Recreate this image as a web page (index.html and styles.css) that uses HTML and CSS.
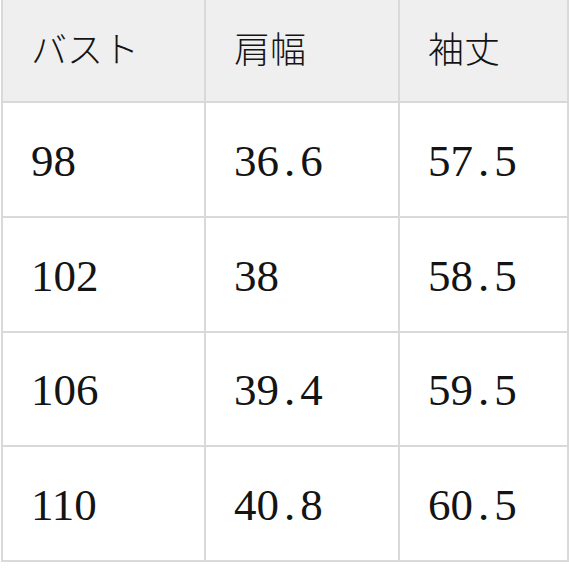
FILE: index.html
```html
<!DOCTYPE html>
<html lang="ja">
<head>
<meta charset="utf-8">
<link rel="stylesheet" href="styles.css">
</head>
<body>
<div class="size-table">
  <div class="cell head">バスト</div>
  <div class="cell head">肩幅</div>
  <div class="cell head">袖丈</div>

  <div class="cell num">98</div>
  <div class="cell num">36<span class="dot">.</span>6</div>
  <div class="cell num">57<span class="dot">.</span>5</div>

  <div class="cell num">102</div>
  <div class="cell num">38</div>
  <div class="cell num">58<span class="dot">.</span>5</div>

  <div class="cell num">106</div>
  <div class="cell num">39<span class="dot">.</span>4</div>
  <div class="cell num">59<span class="dot">.</span>5</div>

  <div class="cell num">110</div>
  <div class="cell num">40<span class="dot">.</span>8</div>
  <div class="cell num">60<span class="dot">.</span>5</div>
</div>
</body>
</html>
```
FILE: styles.css
```css
html, body {
  margin: 0;
  padding: 0;
  background: #ffffff;
}

body {
  overflow: hidden;
}

.size-table {
  display: grid;
  grid-template-columns: 201px 192px 167px;
  grid-template-rows: 112px 113px 113px 112px 113px;
  gap: 2px;
  padding: 2px;
  width: max-content;
  margin: -13px 0 0 1px;
  background: #d9d9d9;
}

.cell {
  display: flex;
  align-items: center;
  padding-left: 28px;
  background: #ffffff;
  color: #141414;
}

.head {
  background: #efefef;
  font-family: "Noto Sans CJK JP", sans-serif;
  font-size: 36px;
  font-weight: 300;
  padding-top: 4px;
}

.num {
  font-family: "Liberation Serif", serif;
  font-size: 45px;
  padding-top: 2px;
}

.dot {
  margin: 0 0.11em;
}
```
